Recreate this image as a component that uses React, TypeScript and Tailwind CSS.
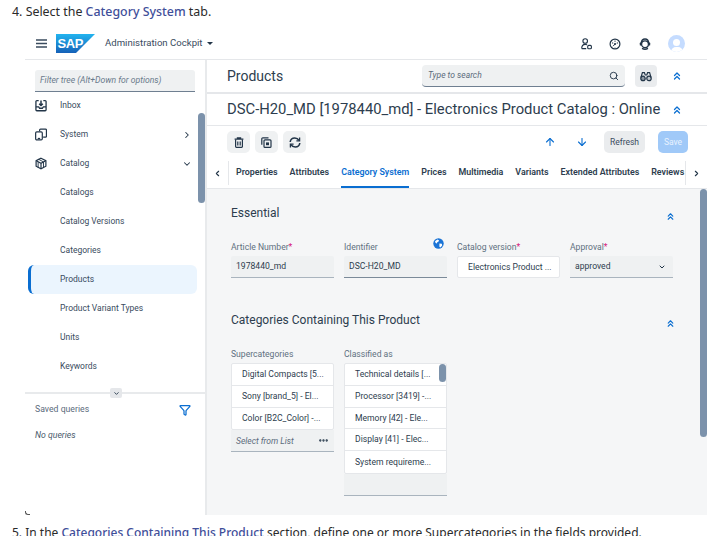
import React from "react";
import {
  ChevronRight,
  ChevronDown,
  ChevronLeft,
  ChevronsUp,
  Search,
  ArrowUp,
  ArrowDown,
  Filter,
  Ellipsis,
} from "lucide-react";

const ink = "#223548";

function SapLogo() {
  return (
    <svg width="39" height="19" viewBox="0 0 39 19">
      <defs>
        <linearGradient id="sap" x1="0" y1="0" x2="0" y2="1">
          <stop offset="0" stopColor="#22b4ef" />
          <stop offset="1" stopColor="#1561b8" />
        </linearGradient>
      </defs>
      <path d="M0 0h39L20 19H0z" fill="url(#sap)" />
      <text x="1.5" y="14" fontSize="13" fontWeight="700" fill="#fff" fontFamily="Liberation Sans" letterSpacing="-0.4">
        SAP
      </text>
    </svg>
  );
}

function InboxIcon() {
  return (
    <svg width="13" height="13" viewBox="0 0 13 13" fill="none" stroke={ink} strokeWidth="1.4">
      <path d="M4 1.2H2a1 1 0 0 0-1 1v9a1 1 0 0 0 1 1h9a1 1 0 0 0 1-1v-9a1 1 0 0 0-1-1H9" />
      <path d="M1 8h3l1 1.5h3L9 8h3" />
      <path d="M6.5 1v5M4.5 4.5l2 2 2-2" strokeWidth="1.6" />
    </svg>
  );
}

function SystemIcon() {
  return (
    <svg width="13" height="13" viewBox="0 0 13 13" fill="none" stroke={ink} strokeWidth="1.3">
      <path d="M5 3V1.6a1 1 0 0 1 1-1h5.4a1 1 0 0 1 1 1v6.8a1 1 0 0 1-1 1H8.8" />
      <rect x="0.7" y="3.6" width="7.2" height="8.8" rx="1.2" />
      <path d="M3 10.8h2.6" />
    </svg>
  );
}

function CatalogIcon() {
  return (
    <svg width="13" height="13" viewBox="0 0 13 13" fill="none" stroke={ink} strokeWidth="1.3">
      <path d="M6.5.8 11.8 3.4v6L6.5 12.2 1.2 9.4v-6z" />
      <path d="M1.4 3.6 6.5 6.2l5.1-2.6M6.5 6.2v5.8" />
      <path d="M4 2 9.2 4.8v6M3.4 5v6" strokeWidth="1" />
    </svg>
  );
}

function PersonBadgeIcon() {
  return (
    <svg width="11" height="12" viewBox="0 0 11 12" fill="none" stroke={ink} strokeWidth="1.1">
      <circle cx="4.2" cy="3" r="2.3" />
      <path d="M.7 10.6c0-3 1.4-4.2 3.5-4.2 .8 0 1.4.2 1.9.5M.7 10.6H5.2" />
      <rect x="6.7" y="7.4" width="3.7" height="3.4" rx="1" />
    </svg>
  );
}

function DialIcon() {
  return (
    <svg width="12" height="12" viewBox="0 0 12 12" fill="none" stroke={ink}>
      <circle cx="6" cy="6" r="4.9" strokeWidth="1.2" />
      <path d="M6 2.6v1.2M3 5h1.2M7.8 5H9M4 8.2 6.6 5.6M6 9v.4" strokeWidth="1" />
      <circle cx="6" cy="6" r="1" fill={ink} strokeWidth="0" />
    </svg>
  );
}

function HeadsetIcon() {
  return (
    <svg width="12" height="12" viewBox="0 0 12 12" fill="none" stroke={ink} strokeWidth="1.3">
      <circle cx="6" cy="6.2" r="3.4" />
      <path d="M2.2 5.2C2.4 2.6 4 1 6 1s3.6 1.6 3.8 4.2" />
      <rect x="0.8" y="4.6" width="2" height="3" rx="0.6" fill={ink} strokeWidth="0" />
      <rect x="9.2" y="4.6" width="2" height="3" rx="0.6" fill={ink} strokeWidth="0" />
      <path d="M3 10.4c1.8 1 4.2 1 6 0" />
    </svg>
  );
}

function BinocularsIcon() {
  return (
    <svg width="12" height="11" viewBox="0 0 12 11" fill="none" stroke={ink} strokeWidth="1.2">
      <path d="M1 6.4 2.4 1.6h2L5.2 4h1.6l.8-2.4h2L11 6.4" />
      <circle cx="3" cy="7.4" r="2.2" fill={ink} fillOpacity="0.45" />
      <circle cx="9" cy="7.4" r="2.2" fill={ink} fillOpacity="0.2" />
    </svg>
  );
}

function TrashIcon() {
  return (
    <svg width="10" height="11" viewBox="0 0 10 11" fill="none" stroke={ink} strokeWidth="1.2">
      <path d="M.6 2.2h8.8M3.4 2V.8h3.2V2" />
      <path d="M1.6 2.4v7.2a.8.8 0 0 0 .8.8h5.2a.8.8 0 0 0 .8-.8V2.4" />
      <path d="M3.8 4.4v4M6.2 4.4v4" />
    </svg>
  );
}

function CopyIcon() {
  return (
    <svg width="11" height="11" viewBox="0 0 11 11" fill="none" stroke={ink} strokeWidth="1.2">
      <path d="M7.5 .8H1.8a1 1 0 0 0-1 1v6" />
      <rect x="3" y="2.8" width="7" height="7.6" rx="1" />
      <rect x="5" y="5.4" width="3" height="2.8" fill={ink} strokeWidth="0" />
    </svg>
  );
}

function SyncIcon() {
  return (
    <svg width="12" height="11" viewBox="0 0 12 11" fill="none" stroke={ink} strokeWidth="1.6">
      <path d="M1.2 5C1.5 2.6 3.4 1 5.8 1c1.8 0 3.2.8 4.2 2.4" />
      <path d="M10.8 6c-.3 2.4-2.2 4-4.6 4-1.8 0-3.2-.8-4.2-2.4" />
      <path d="M10.6.6v3.2H7.4M1.4 10.4V7.2h3.2" strokeWidth="1.3" />
    </svg>
  );
}

function GlobeIcon() {
  return (
    <svg width="11" height="11" viewBox="0 0 11 11">
      <circle cx="5.5" cy="5.5" r="5.2" fill="#1b74d6" />
      <path d="M2 3.2 4.4 1.6l1.6.6-.6 1.6-1.2.4-.2 1.4L2.6 5zM6.4 5.4l2.4.4.4 1.6-1.8 2-1-.6z" fill="#fff" />
    </svg>
  );
}

function TreeItem({ label, icon, chevron, active }: { label: string; icon?: React.ReactNode; chevron?: React.ReactNode; active?: boolean }) {
  return (
    <div
      className={`flex h-[29px] items-center rounded-md pr-[5px] ${
        active ? "border-l-[3px] border-[#0a6ed1] bg-[#ebf5fe] pl-[29px]" : "pl-[32px]"
      }`}
    >
      {icon && <span className="-ml-[25px] mr-[13px] flex w-[12px] justify-center">{icon}</span>}
      <span className="flex-1 text-[8.5px] text-[#3a4b5e]">{label}</span>
      {chevron}
    </div>
  );
}

function Sidebar() {
  return (
    <aside className="flex w-[182px] shrink-0 flex-col border-r-2 border-[#e8eaec]">
      <div className="relative flex-1 overflow-hidden">
        <div className="px-[10px] pt-[10px]">
          <div className="flex h-[22px] items-center rounded-t-[3px] border-b border-[#6f7f91] bg-[#eff1f2] px-[5px] text-[8.6px] italic text-[#6a7a8b]">
            Filter tree (Alt+Down for options)
          </div>
        </div>
        <div className="-mt-[1px] pl-[3px] pr-[8px]">
          <TreeItem label="Inbox" icon={<InboxIcon />} />
          <TreeItem label="System" icon={<SystemIcon />} chevron={<ChevronRight size={10} strokeWidth={2.5} className="text-[#223548]" />} />
          <TreeItem label="Catalog" icon={<CatalogIcon />} chevron={<ChevronDown size={10} strokeWidth={2.5} className="text-[#223548]" />} />
          <TreeItem label="Catalogs" />
          <TreeItem label="Catalog Versions" />
          <TreeItem label="Categories" />
          <TreeItem label="Products" active />
          <TreeItem label="Product Variant Types" />
          <TreeItem label="Units" />
          <TreeItem label="Keywords" />
        </div>
        <div className="absolute right-0 top-[53px] h-[90px] w-[7px] rounded-full bg-[#7c92ab]" />
      </div>
      <div className="relative h-[2px] bg-[#e8eaec]">
        <div className="absolute left-[85px] -top-[4px] flex h-[10px] w-[12px] items-center justify-center rounded-[2px] bg-[#e5e7ea]">
          <ChevronDown size={7} strokeWidth={3} className="text-[#223548]" />
        </div>
      </div>
      <div className="relative h-[121px] px-[10px]">
        <div className="flex items-center justify-between pt-[9px] pr-[4px] text-[8.7px] text-[#5b6b7c]">
          Saved queries
          <Filter size={12} strokeWidth={2.5} className="text-[#0a6ed1]" />
        </div>
        <div className="mt-[13px] text-[8.7px] italic text-[#4a5a6b]">No queries</div>
        <div className="absolute bottom-0 left-0 h-[4px] w-[5px] rounded-bl-[3px] border-b border-l border-[#555]" />
      </div>
    </aside>
  );
}

function Field({ label, required, children }: { label: string; required?: boolean; children: React.ReactNode }) {
  return (
    <div className="w-[103px]">
      <div className="mb-[3px] h-[12px] text-[8.6px] leading-[12px] text-[#607080]">
        {label}
        {required && <span className="text-[#d6187b]">*</span>}
      </div>
      {children}
    </div>
  );
}

function Row({ text, last }: { text: string; last?: boolean }) {
  return (
    <div className={`flex h-[21.8px] items-center whitespace-nowrap pl-[10px] text-[8.6px] text-[#2d3d4e] ${last ? "" : "border-b border-[#e5e7ea]"}`}>
      {text}
    </div>
  );
}

export default function App() {
  const tabs = ["Properties", "Attributes", "Category System", "Prices", "Multimedia", "Variants", "Extended Attributes", "Reviews"];
  return (
    <div className="flex h-[536px] w-[726px] flex-col overflow-hidden bg-white font-['Roboto','Liberation_Sans',sans-serif]">
      <p className="h-[28px] shrink-0 pl-[12px] pt-[3px] font-['Noto_Sans',sans-serif] text-[12.4px] leading-[18px] text-[#2a2a2a]">
        4. Select the <span className="font-medium text-[#3f4f9a]">Category System</span> tab.
      </p>
      <div className="ml-[25px] flex h-[487px] w-[682px] shrink-0 flex-col">
        <header className="flex h-[32px] shrink-0 items-center border-b border-[#e5e7ea] pl-[11px]">
          <svg width="11" height="9" viewBox="0 0 11 9" fill="none" stroke="#3a4b5e" strokeWidth="1.6">
            <path d="M0 1h11M0 4.5h11M0 8h11" />
          </svg>
          <span className="ml-[9px] flex">
            <SapLogo />
          </span>
          <span className="ml-[10px] text-[9.6px] text-[#3a4b5e]">Administration Cockpit</span>
          <span className="ml-[4px] h-0 w-0 border-x-[3px] border-t-[3px] border-x-transparent border-t-[#223548]" />
          <div className="ml-auto flex items-center gap-[17.5px] pr-[22px]">
            <PersonBadgeIcon />
            <DialIcon />
            <HeadsetIcon />
            <div className="flex h-[17px] w-[17px] flex-col items-center justify-end overflow-hidden rounded-full bg-[#c5dcff]">
              <div className="h-[7px] w-[7px] rounded-full bg-white" />
              <div className="mt-[1px] h-[5px] w-[12px] rounded-t-full bg-white" />
            </div>
          </div>
        </header>
        <div className="flex min-h-0 flex-1">
          <Sidebar />
          <main className="flex min-w-0 flex-1 flex-col">
            <div className="flex h-[34px] shrink-0 items-center border-b-2 border-[#e5e7ea] pl-[20px] pr-[24px]">
              <h1 className="text-[14px] text-[#2d3d4e]">Products</h1>
              <div className="ml-auto flex h-[22px] w-[203px] items-center justify-between rounded-[4px] border-b border-[#6f7f91] bg-[#eff1f2] pl-[6px] pr-[6px] text-[8.5px] italic text-[#5b6b7c]">
                Type to search
                <Search size={10} strokeWidth={2.2} className="text-[#223548]" />
              </div>
              <div className="ml-[10px] flex h-[22px] w-[22px] items-center justify-center rounded-[4px] bg-[#eaecee]">
                <BinocularsIcon />
              </div>
              <ChevronsUp size={12} strokeWidth={2.5} className="ml-[14px] text-[#0a6ed1]" />
            </div>
            <div className="flex h-[32px] shrink-0 items-center border-b border-[#e5e7ea] pl-[20px] pr-[24px]">
              <h2 className="flex-1 whitespace-nowrap text-[14.8px] text-[#2d3d4e]">DSC-H20_MD [1978440_md] - Electronics Product Catalog : Online</h2>
              <ChevronsUp size={12} strokeWidth={2.5} className="text-[#0a6ed1]" />
            </div>
            <div className="flex h-[32px] shrink-0 items-center pl-[20px] pr-[19px]">
              {[<TrashIcon key="t" />, <CopyIcon key="c" />, <SyncIcon key="s" />].map((icon, i) => (
                <div key={i} className="mr-[5px] flex h-[22px] w-[23px] items-center justify-center rounded-[5px] bg-[#eff1f2]">
                  {icon}
                </div>
              ))}
              <ArrowUp size={12} strokeWidth={2.2} className="ml-auto text-[#0a6ed1]" />
              <ArrowDown size={12} strokeWidth={2.2} className="ml-[20px] text-[#0a6ed1]" />
              <div className="ml-[16px] flex h-[22px] w-[41px] items-center justify-center rounded-[5px] bg-[#eaecee] text-[8.5px] text-[#3a4b5e]">Refresh</div>
              <div className="ml-[13px] flex h-[22px] w-[30px] items-center justify-center rounded-[5px] bg-[#a0c9f8] text-[8.5px] text-[#e8f2fe]">Save</div>
            </div>
            <div className="flex h-[31px] shrink-0 items-stretch border-b border-[#e5e7ea]">
              <div className="my-[3px] flex w-[22px] items-center justify-center border-r border-[#e5e7ea]">
                <ChevronLeft size={9} strokeWidth={3} className="text-[#223548]" />
              </div>
              <div className="flex min-w-0 flex-1 gap-[12px] overflow-hidden pl-[7px]">
                {tabs.map((t) => (
                  <div
                    key={t}
                    className={`flex items-center whitespace-nowrap text-[8.9px] font-semibold ${
                      t === "Category System" ? "border-b-2 border-[#0a6ed1] pt-[2px] text-[#0a6ed1]" : "text-[#2d3d4e]"
                    }`}
                  >
                    {t}
                  </div>
                ))}
              </div>
              <div className="my-[3px] flex w-[22px] shrink-0 items-center justify-center border-l border-[#e5e7ea]">
                <ChevronRight size={9} strokeWidth={3} className="text-[#223548]" />
              </div>
            </div>
            <div className="relative min-h-0 flex-1 bg-[#f5f6f7] pl-[24px] pr-[31px]">
              <div className="flex items-center justify-between pt-[15px]">
                <h3 className="text-[12px] leading-[18px] text-[#2d3d4e]">Essential</h3>
                <ChevronsUp size={11} strokeWidth={2.5} className="mt-[7px] text-[#0a6ed1]" />
              </div>
              <div className="mt-[19px] flex gap-[10px]">
                <Field label="Article Number" required>
                  <div className="flex h-[22px] items-center rounded-t-[2px] border-b border-[#a9b4be] bg-[#eff1f2] pl-[5px] text-[8.6px] text-[#2d3d4e]">1978440_md</div>
                </Field>
                <Field label="Identifier">
                  <div className="relative">
                    <span className="absolute right-[3px] -top-[18px]">
                      <GlobeIcon />
                    </span>
                    <div className="flex h-[22px] items-center rounded-t-[2px] border-b border-[#7b8a99] bg-[#eff1f2] pl-[5px] text-[8.6px] text-[#2d3d4e]">DSC-H20_MD</div>
                  </div>
                </Field>
                <Field label="Catalog version" required>
                  <div className="flex h-[22px] items-center whitespace-nowrap rounded-[2px] border border-[#e5e7ea] bg-white pl-[10px] text-[8.6px] text-[#2d3d4e]">Electronics Product ...</div>
                </Field>
                <Field label="Approval" required>
                  <div className="flex h-[22px] items-center justify-between rounded-t-[2px] border-b border-[#a9b4be] bg-[#eff1f2] pl-[5px] pr-[7px] text-[8.6px] text-[#2d3d4e]">
                    approved
                    <ChevronDown size={8} strokeWidth={3} className="text-[#223548]" />
                  </div>
                </Field>
              </div>
              <div className="mt-[33px] flex items-center justify-between">
                <h3 className="text-[12px] leading-[18px] text-[#2d3d4e]">Categories Containing This Product</h3>
                <ChevronsUp size={11} strokeWidth={2.5} className="mt-[7px] text-[#0a6ed1]" />
              </div>
              <div className="mt-[19px] flex gap-[10px]">
                <Field label="Supercategories">
                  <div className="rounded-[2px] border border-[#e5e7ea] bg-white">
                    <Row text="Digital Compacts [5..." />
                    <Row text="Sony [brand_5] - El..." />
                    <Row text="Color [B2C_Color] -..." last />
                  </div>
                  <div className="flex h-[22px] items-center justify-between border-b border-[#a9b4be] bg-[#eff1f2] pl-[5px] pr-[5px] text-[8.5px] italic text-[#5b6b7c]">
                    Select from List
                    <Ellipsis size={11} strokeWidth={3} className="text-[#223548]" />
                  </div>
                </Field>
                <Field label="Classified as">
                  <div className="relative rounded-[2px] border border-[#e5e7ea] bg-white">
                    <Row text="Technical details [..." />
                    <Row text="Processor [3419] -..." />
                    <Row text="Memory [42] - Ele..." />
                    <Row text="Display [41] - Elec..." />
                    <Row text="System requireme..." last />
                    <div className="absolute right-0 top-0 h-[18px] w-[7px] rounded-full bg-[#7c92ab]" />
                  </div>
                  <div className="h-[22px] border-b border-[#a9b4be] bg-[#eff1f2]" />
                </Field>
              </div>
              <div className="absolute right-0 top-0 h-[248px] w-[7px] rounded-sm bg-[#7c92ab]" />
            </div>
          </main>
        </div>
      </div>
      <p className="shrink-0 whitespace-nowrap pl-[12px] pt-[9px] font-['Noto_Sans',sans-serif] text-[12px] leading-[18px] text-[#2a2a2a]">
        5. In the <span className="font-medium text-[#3f4f9a]">Categories Containing This Product</span> section, define one or more Supercategories in the fields provided.
      </p>
    </div>
  );
}
